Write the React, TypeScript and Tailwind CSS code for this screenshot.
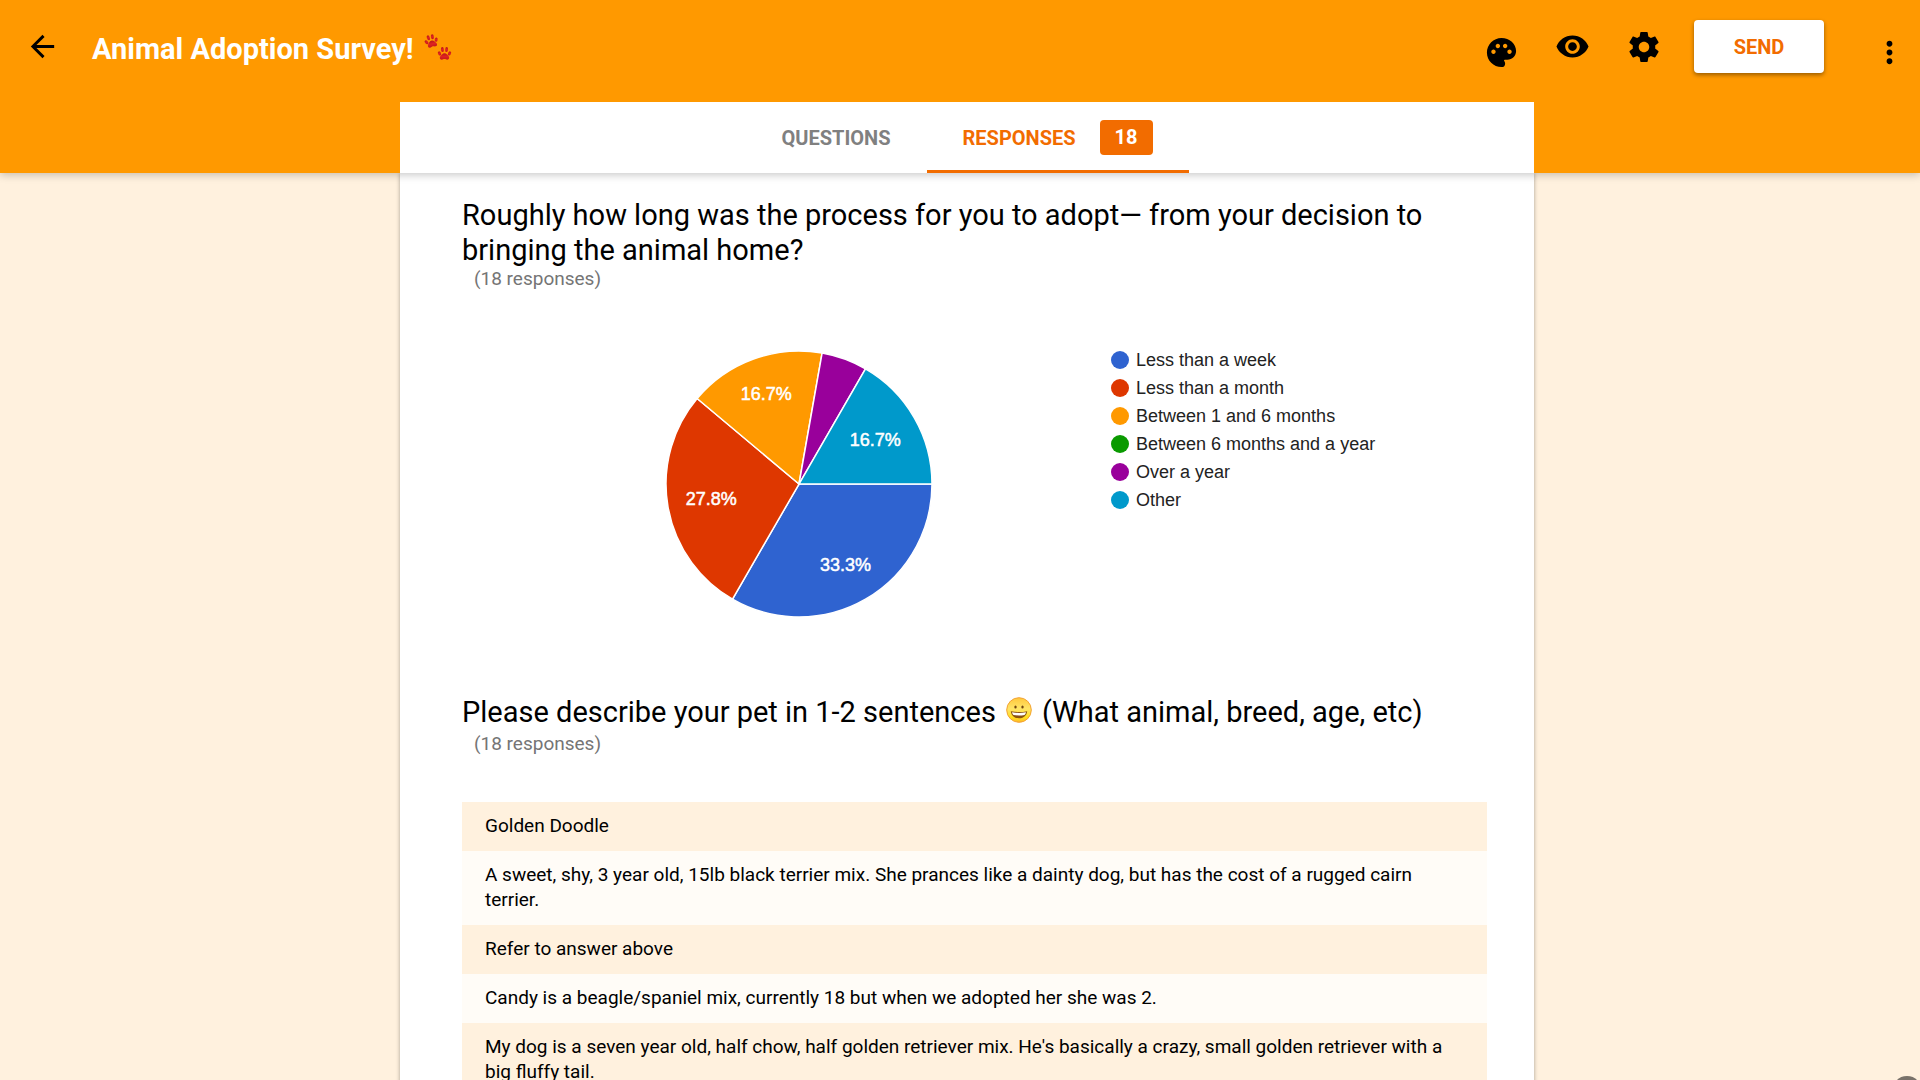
import React from "react";
import { MdArrowBack, MdMoreVert, MdPalette, MdVisibility } from "react-icons/md";

type Slice = { label: string; value: number; color: string; labelRadius: number };

const slices: Slice[] = [
  { label: "Less than a week", value: 6, color: "#2f63d0", labelRadius: 93 },
  { label: "Less than a month", value: 5, color: "#de3700", labelRadius: 89 },
  { label: "Between 1 and 6 months", value: 3, color: "#ff9900", labelRadius: 96 },
  { label: "Between 6 months and a year", value: 0, color: "#0a9a00", labelRadius: 90 },
  { label: "Over a year", value: 1, color: "#99009b", labelRadius: 90 },
  { label: "Other", value: 3, color: "#0099cb", labelRadius: 88 },
];

const answers = [
  "Golden Doodle",
  "A sweet, shy, 3 year old, 15lb black terrier mix. She prances like a dainty dog, but has the cost of a rugged cairn terrier.",
  "Refer to answer above",
  "Candy is a beagle/spaniel mix, currently 18 but when we adopted her she was 2.",
  "My dog is a seven year old, half chow, half golden retriever mix. He's basically a crazy, small golden retriever with a big fluffy tail.",
];

const RADIUS = 133;
const CENTER = 134;

function PieChart() {
  const total = slices.reduce((sum, s) => sum + s.value, 0);
  const point = (turn: number, r: number) => {
    const a = turn * 2 * Math.PI;
    return [CENTER + r * Math.cos(a), CENTER + r * Math.sin(a)];
  };
  let start = 0;
  const parts = slices
    .filter((s) => s.value > 0)
    .map((s) => {
      const from = start / total;
      start += s.value;
      const to = start / total;
      const [x1, y1] = point(from, RADIUS);
      const [x2, y2] = point(to, RADIUS);
      const [lx, ly] = point((from + to) / 2, s.labelRadius);
      return {
        ...s,
        d: `M${CENTER} ${CENTER}L${x1} ${y1}A${RADIUS} ${RADIUS} 0 0 1 ${x2} ${y2}Z`,
        lx,
        ly,
        share: (s.value / total) * 100,
      };
    });
  return (
    <svg width="268" height="268" viewBox="0 0 268 268" role="img" aria-label="Adoption time" className="mt-1">
      {parts.map((p) => (
        <path key={p.label} d={p.d} fill={p.color} stroke="#fff" strokeWidth="1.5" />
      ))}
      {parts
        .filter((p) => p.share > 10)
        .map((p) => (
          <text
            key={p.label}
            x={p.lx}
            y={p.ly + 6}
            textAnchor="middle"
            fill="#fff"
            stroke="#fff"
            strokeWidth="0.5"
            className="font-['Liberation_Sans',sans-serif] text-[18px]"
          >
            {p.share.toFixed(1)}%
          </text>
        ))}
    </svg>
  );
}

function Gear() {
  return (
    <svg width="36" height="36" viewBox="0 0 24 24" fill="currentColor" aria-hidden="true">
      <path d="M19.43 12.98c.04-.32.07-.64.07-.98s-.03-.66-.07-.98l2.11-1.65c.19-.15.24-.42.12-.64l-2-3.46c-.12-.22-.39-.3-.61-.22l-2.49 1c-.52-.4-1.08-.73-1.69-.98l-.38-2.65C14.46 2.18 14.25 2 14 2h-4c-.25 0-.46.18-.49.42l-.38 2.65c-.61.25-1.17.59-1.69.98l-2.49-1c-.23-.09-.49 0-.61.22l-2 3.46c-.13.22-.07.49.12.64l2.11 1.65c-.04.32-.07.65-.07.98s.03.66.07.98l-2.11 1.65c-.19.15-.24.42-.12.64l2 3.46c.12.22.39.3.61.22l2.49-1c.52.4 1.08.73 1.69.98l.38 2.65c.03.24.24.42.49.42h4c.25 0 .46-.18.49-.42l.38-2.65c.61-.25 1.17-.59 1.69-.98l2.49 1c.23.09.49 0 .61-.22l2-3.46c.12-.22.07-.49-.12-.64l-2.11-1.65zM12 15.500c-1.930 0-3.500-1.570-3.500-3.500s1.570-3.500 3.500-3.500 3.500 1.570 3.500 3.500-1.570 3.500-3.500 3.500z" />
    </svg>
  );
}

function Paw({ transform }: { transform: string }) {
  return (
    <g transform={transform} fill="url(#paw)">
      <path d="M0-.8C2-.8 2.700.7 4 2c1.200 1.200.8 3.700-1.200 3.700C1.600 5.700 1 5 0 5S-1.600 5.700-2.800 5.700C-4.800 5.700-5.200 3.200-4 2-2.700.7-2-.8 0-.8Z" />
      <ellipse cx="-5" cy="-.6" rx="1.500" ry="2.200" transform="rotate(-25 -5 -.6)" />
      <ellipse cx="-2.100" cy="-4.400" rx="1.500" ry="2.500" transform="rotate(-6 -2.100 -4.400)" />
      <ellipse cx="2.100" cy="-4.400" rx="1.500" ry="2.500" transform="rotate(6 2.100 -4.400)" />
      <ellipse cx="5" cy="-.6" rx="1.500" ry="2.200" transform="rotate(25 5 -.6)" />
    </g>
  );
}

function PawPrints() {
  return (
    <svg width="28" height="28" viewBox="0 0 28 28" aria-hidden="true">
      <defs>
        <linearGradient id="paw" x1="0" y1="0" x2="0" y2="1">
          <stop offset="0" stopColor="#b8161a" />
          <stop offset="0.5" stopColor="#e02420" />
          <stop offset="1" stopColor="#c4161c" />
        </linearGradient>
      </defs>
      <Paw transform="translate(7.500 8.500) rotate(-15)" />
      <Paw transform="translate(20.500 21)" />
    </svg>
  );
}

function Grin() {
  return (
    <svg width="26" height="26" viewBox="0 0 26 26" aria-hidden="true" className="mx-[10px] inline-block align-[-1px]">
      <defs>
        <linearGradient id="face" x1="0" y1="0" x2="0" y2="1">
          <stop offset="0" stopColor="#ffc83c" />
          <stop offset="0.450" stopColor="#ffe468" />
          <stop offset="0.800" stopColor="#ffdf1c" />
          <stop offset="1" stopColor="#fdb92b" />
        </linearGradient>
      </defs>
      <circle cx="13" cy="13" r="12.300" fill="url(#face)" stroke="#f3a234" strokeWidth="1" />
      <ellipse cx="9.500" cy="10" rx="1.200" ry="1.600" fill="#70440e" />
      <ellipse cx="16.500" cy="10" rx="1.200" ry="1.600" fill="#70440e" />
      <path d="M4.800 14.200Q13 16 21.200 14.200C20.500 19 17.300 21.300 13 21.300S5.500 19 4.800 14.200Z" fill="#8a5310" />
      <path d="M6 15.200Q13 16.700 20 15.200 19.600 17.300 18.500 18 13 19 7.500 18 6.400 17.300 6 15.200Z" fill="#fff" />
    </svg>
  );
}

export default function App() {
  return (
    <div className="flex h-screen flex-col overflow-hidden bg-[#fff1de] font-[Roboto,sans-serif] text-black">
      <header className="relative z-10 shrink-0 bg-[#ff9900] shadow-[0_2px_8px_rgba(0,0,0,0.22)]">
        <div className="flex h-[102px] items-start pt-5 pr-[13px] pl-[25px]">
          <button aria-label="Back" className="flex h-[53px] items-center">
            <MdArrowBack size={35} />
          </button>
          <h1 className="ml-8 flex h-15 items-center gap-[10px] text-[29px] font-bold whitespace-nowrap text-white">
            Animal Adoption Survey!
            <span className="pb-1.5">
              <PawPrints />
            </span>
          </h1>
          <div className="ml-auto flex items-start">
            <button aria-label="Customize theme" className="mr-9 flex h-16 items-center">
              <MdPalette size={35} />
            </button>
            <button aria-label="Preview" className="mr-9 flex h-[53px] items-center">
              <MdVisibility size={35} />
            </button>
            <button aria-label="Settings" className="mr-8 flex h-[53px] items-center">
              <Gear />
            </button>
            <button className="mr-12 h-[53px] w-[130px] rounded-[4px] bg-white text-[20px] font-bold text-[#f26c00] shadow-[0_2px_4px_rgba(0,0,0,0.4)]">
              SEND
            </button>
            <button aria-label="More" className="flex h-16 items-center">
              <MdMoreVert size={35} />
            </button>
          </div>
        </div>
        <div className="pl-[14px]">
          <nav className="mx-auto flex h-[71px] w-full max-w-[1134px] justify-center bg-white text-[20px] font-bold">
            <button className="px-9 text-[#808080]">QUESTIONS</button>
            <button className="flex items-center gap-6 border-y-3 border-t-transparent border-b-[#f26c00] px-9 text-[#f26c00]">
              RESPONSES
              <span className="rounded-[4px] bg-[#f26c00] px-[15px] leading-[35px] text-white">18</span>
            </button>
          </nav>
        </div>
      </header>

      <main className="min-h-0 flex-1 overflow-hidden pl-[14px]">
        <div className="mx-auto min-h-full w-full max-w-[1134px] bg-white px-[62px] pt-[25px] shadow-[0_0_4px_rgba(0,0,0,0.35)]">
          <section>
            <h2 className="text-[29px] leading-[35px]">
              Roughly how long was the process for you to adopt— from your decision to bringing the animal home?
            </h2>
            <p className="pl-3 text-[19px] leading-[22px] text-[#757575]">(18 responses)</p>
            <div className="flex pt-14 pl-[203px]">
              <PieChart />
              <ul className="ml-[178px] font-['Liberation_Sans',sans-serif] text-[18px] leading-7 text-[#222]">
                {slices.map((s) => (
                  <li key={s.label} className="flex items-center gap-[7px]">
                    <span className="size-[18px] rounded-full" style={{ backgroundColor: s.color }} />
                    {s.label}
                  </li>
                ))}
              </ul>
            </div>
          </section>

          <section className="pt-[74px]">
            <h2 className="text-[29px] leading-[41px]">
              Please describe your pet in 1-2 sentences
              <Grin />
              (What animal, breed, age, etc)
            </h2>
            <p className="pl-3 text-[19px] leading-[22px] text-[#757575]">(18 responses)</p>
            <ul className="mt-[47px] mr-[-15px] text-[19px] leading-[25px]">
              {answers.map((a) => (
                <li key={a} className="px-[23px] pt-[11px] pb-[13px] odd:bg-[#fff1de] even:bg-[#fffcf7]">
                  {a}
                </li>
              ))}
            </ul>
          </section>
        </div>
      </main>

      <button
        aria-label="Help"
        className="fixed right-[-2px] bottom-[-26px] size-[30px] rounded-full bg-[#79726a]"
      />
    </div>
  );
}
